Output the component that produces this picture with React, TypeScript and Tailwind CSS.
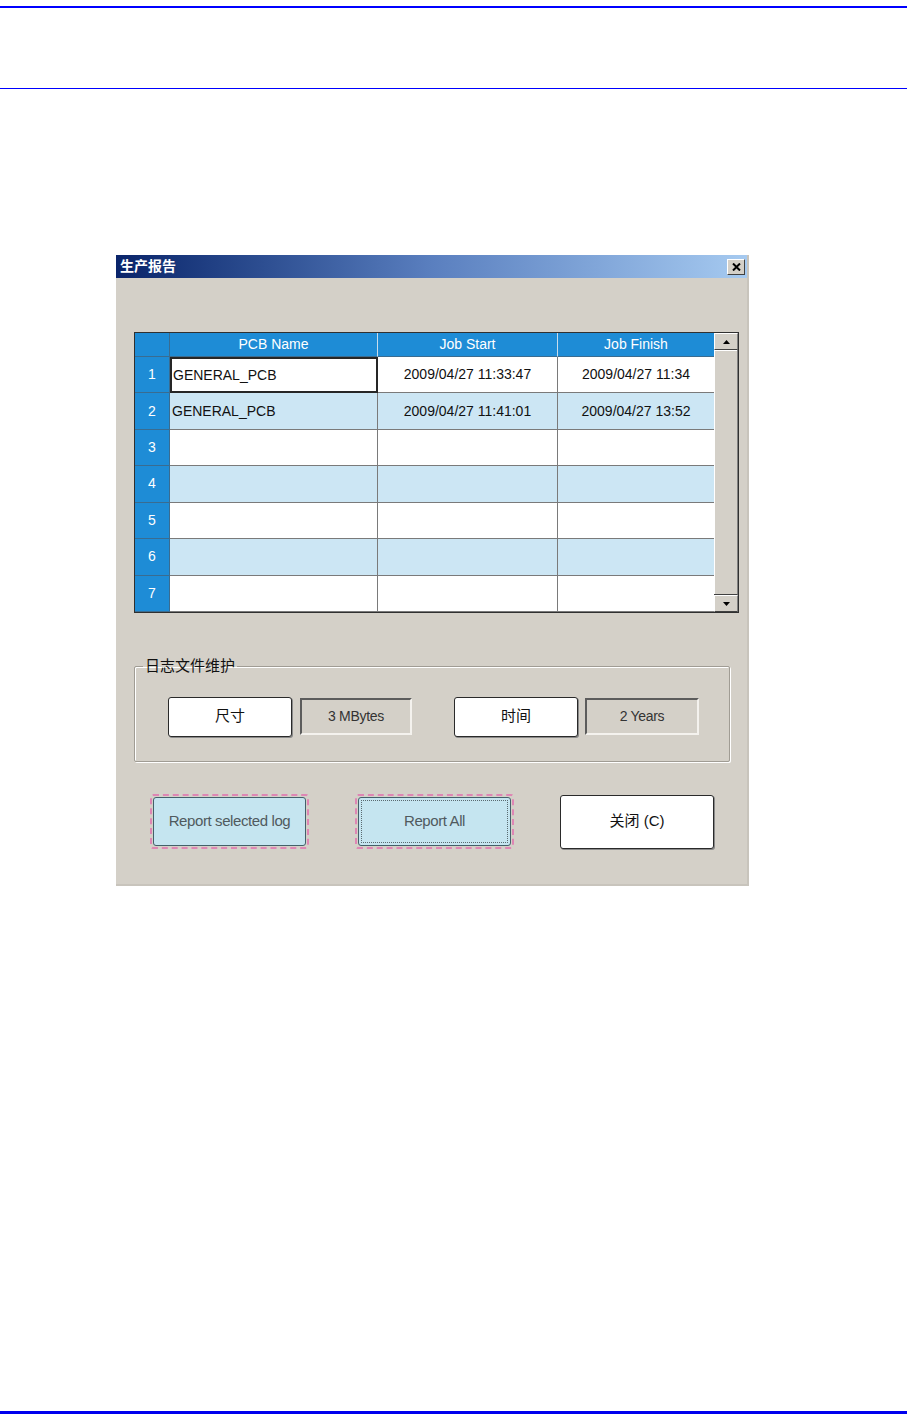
import React from "react";

const font = { fontFamily: '"Liberation Sans", Arial, "Noto Sans CJK SC", sans-serif' };

const rows = [
  { name: "GENERAL_PCB", start: "2009/04/27 11:33:47", finish: "2009/04/27 11:34" },
  { name: "GENERAL_PCB", start: "2009/04/27 11:41:01", finish: "2009/04/27 13:52" },
  { name: "", start: "", finish: "" },
  { name: "", start: "", finish: "" },
  { name: "", start: "", finish: "" },
  { name: "", start: "", finish: "" },
  { name: "", start: "", finish: "" },
];

export default function App() {
  return (
    <div className="flex h-[1424px] w-[907px] flex-col bg-white" style={font}>
      <div className="mt-[6px] h-[2px] bg-[#0000ff]" />
      <div className="mt-[80px] h-[1px] bg-[#0000ff]" />
      <div className="ml-[116px] mt-[166px]">
        <ReportWindow />
      </div>
      <div className="flex-1" />
      <div className="mb-[10px] h-[3px] bg-[#0000ee]" />
    </div>
  );
}

function ReportWindow() {
  return (
    <div className="flex h-[631px] w-[633px] flex-col border-b-2 border-r-2 border-[#c8c4bc] bg-[#d4d0c8]">
      <div className="flex h-[23px] items-center justify-between bg-gradient-to-r from-[#0a246a] via-[#5a7fbf] to-[#a6caf0] pl-[4px] pr-[2px]">
        <span className="text-[14px] font-bold text-white">生产报告</span>
        <button className="flex h-[16px] w-[18px] items-center justify-center border border-b-[#404040] border-l-white border-r-[#404040] border-t-white bg-[#d4d0c8]">
          <svg width="9" height="8" viewBox="0 0 9 8">
            <path d="M1 0.5 L8 7.5 M8 0.5 L1 7.5" stroke="#000" strokeWidth="2" />
          </svg>
        </button>
      </div>

      <div className="ml-[18px] mt-[54px]">
        <LogTable />
      </div>

      <fieldset className="ml-[18px] mt-[42px] h-[107px] w-[596px] rounded-[2px] border border-[#a09c94] shadow-[1px_1px_0_#fff,inset_1px_1px_0_#fff]">
        <legend className="ml-[8px] px-[2px] text-[15px] text-[#111]">日志文件维护</legend>
        <div className="mt-[19px] flex items-center pl-[33px]">
          <WhiteButton className="h-[40px] w-[124px]">尺寸</WhiteButton>
          <Field className="ml-[8px] w-[112px]">3 MBytes</Field>
          <WhiteButton className="ml-[42px] h-[40px] w-[124px]">时间</WhiteButton>
          <Field className="ml-[7px] w-[114px]">2 Years</Field>
        </div>
      </fieldset>

      <div className="ml-[34px] mt-[32px] flex items-center">
        <ReportButton>Report selected log</ReportButton>
        <div className="ml-[46px]">
          <ReportButton focused>Report All</ReportButton>
        </div>
        <WhiteButton className="ml-[46px] h-[54px] w-[154px] text-[15px]">关闭 (C)</WhiteButton>
      </div>
    </div>
  );
}

function LogTable() {
  return (
    <div className="flex h-[281px] w-[605px] border border-[#303030]">
      <div className="flex flex-col">
        <div className="grid h-[24px] grid-cols-[35px_208px_180px_156px] bg-[#1e8cd6] text-[14px] text-white">
          <div className="border-b border-r border-[#3a6c90]" />
          <div className="flex items-center justify-center border-b border-r border-b-[#3a6c90] border-r-[#c8dcec]">PCB Name</div>
          <div className="flex items-center justify-center border-b border-r border-b-[#3a6c90] border-r-[#c8dcec]">Job Start</div>
          <div className="flex items-center justify-center border-b border-b-[#3a6c90]">Job Finish</div>
        </div>
        {rows.map((r, i) => (
          <div
            key={i}
            className={`grid h-[36.5px] grid-cols-[35px_208px_180px_156px] text-[14px] text-[#111] ${
              i % 2 === 1 ? "bg-[#cce6f4]" : "bg-white"
            }`}
          >
            <div className="flex items-center justify-center border-b border-r border-[#3a6c90] bg-[#1e8cd6] text-white">
              {i + 1}
            </div>
            <div
              className={`flex items-center ${
                i === 0 ? "border-2 border-[#262626] pl-[1px]" : "border-b border-r border-[#7a7a7a] pl-[2px]"
              }`}
            >
              {r.name}
            </div>
            <div className="flex items-center justify-center border-b border-r border-[#7a7a7a]">{r.start}</div>
            <div className="flex items-center justify-center border-b border-[#7a7a7a]">{r.finish}</div>
          </div>
        ))}
      </div>
      <ScrollBar />
    </div>
  );
}

function ScrollBar() {
  return (
    <div className="flex w-[24px] flex-col bg-[#d4d0c8]">
      <Bevel className="h-[17px]">
        <svg width="7" height="4" viewBox="0 0 7 4">
          <path d="M3.5 0 L7 4 L0 4 Z" fill="#000" />
        </svg>
      </Bevel>
      <div className="flex-1 border-b border-r border-b-[#404040] border-r-[#808080] shadow-[inset_1px_1px_0_#fff]" />
      <Bevel className="h-[17px]">
        <svg width="7" height="4" viewBox="0 0 7 4">
          <path d="M0 0 L7 0 L3.5 4 Z" fill="#000" />
        </svg>
      </Bevel>
    </div>
  );
}

function Bevel({ className, children }: { className?: string; children: React.ReactNode }) {
  return (
    <div
      className={`flex items-center justify-center border border-b-[#404040] border-l-white border-r-[#808080] border-t-white bg-[#d4d0c8] ${className ?? ""}`}
    >
      {children}
    </div>
  );
}

function WhiteButton({ className, children }: { className?: string; children: React.ReactNode }) {
  return (
    <button
      className={`flex items-center justify-center rounded-[3px] border border-[#2a2a2a] bg-white text-[15px] text-[#111] shadow-[1px_1px_0_#8a8a8a] ${className ?? ""}`}
    >
      {children}
    </button>
  );
}

function Field({ className, children }: { className?: string; children: React.ReactNode }) {
  return (
    <div
      className={`flex h-[37px] items-center justify-center border-2 border-b-[#f4f2ee] border-l-[#5c5c5c] border-r-[#f4f2ee] border-t-[#5c5c5c] text-[14px] tracking-[-0.3px] text-[#333] ${className ?? ""}`}
    >
      {children}
    </div>
  );
}

function ReportButton({ children, focused }: { children: React.ReactNode; focused?: boolean }) {
  return (
    <div className="h-[55px] w-[159px] rounded-[3px] border-2 border-dashed border-[#de86b4] p-[1px]">
      <div className="flex h-full w-full items-center justify-center rounded-[3px] border border-[#44606a] bg-[#c5e5f0] p-[2px]">
        <div
          className={`flex h-full w-full items-center justify-center text-[15px] tracking-[-0.4px] text-[#505a5e] ${
            focused ? "border border-dotted border-[#5a6a70]" : ""
          }`}
        >
          {children}
        </div>
      </div>
    </div>
  );
}
